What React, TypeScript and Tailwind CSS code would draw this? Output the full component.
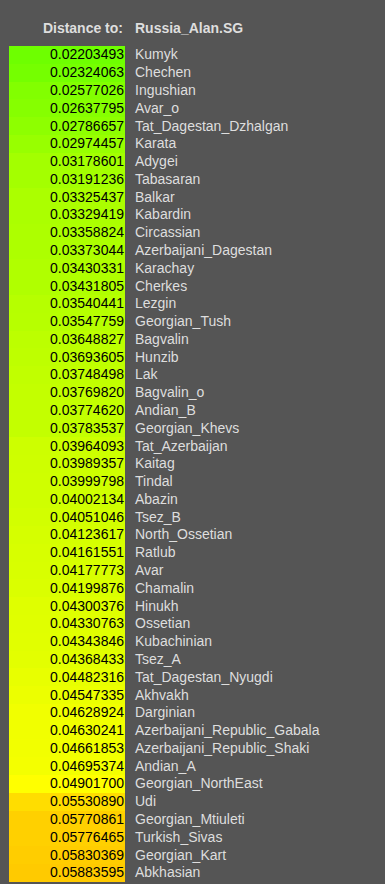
const rows: [string, string][] = [
  ["0.02203493", "Kumyk"],
  ["0.02324063", "Chechen"],
  ["0.02577026", "Ingushian"],
  ["0.02637795", "Avar_o"],
  ["0.02786657", "Tat_Dagestan_Dzhalgan"],
  ["0.02974457", "Karata"],
  ["0.03178601", "Adygei"],
  ["0.03191236", "Tabasaran"],
  ["0.03325437", "Balkar"],
  ["0.03329419", "Kabardin"],
  ["0.03358824", "Circassian"],
  ["0.03373044", "Azerbaijani_Dagestan"],
  ["0.03430331", "Karachay"],
  ["0.03431805", "Cherkes"],
  ["0.03540441", "Lezgin"],
  ["0.03547759", "Georgian_Tush"],
  ["0.03648827", "Bagvalin"],
  ["0.03693605", "Hunzib"],
  ["0.03748498", "Lak"],
  ["0.03769820", "Bagvalin_o"],
  ["0.03774620", "Andian_B"],
  ["0.03783537", "Georgian_Khevs"],
  ["0.03964093", "Tat_Azerbaijan"],
  ["0.03989357", "Kaitag"],
  ["0.03999798", "Tindal"],
  ["0.04002134", "Abazin"],
  ["0.04051046", "Tsez_B"],
  ["0.04123617", "North_Ossetian"],
  ["0.04161551", "Ratlub"],
  ["0.04177773", "Avar"],
  ["0.04199876", "Chamalin"],
  ["0.04300376", "Hinukh"],
  ["0.04330763", "Ossetian"],
  ["0.04343846", "Kubachinian"],
  ["0.04368433", "Tsez_A"],
  ["0.04482316", "Tat_Dagestan_Nyugdi"],
  ["0.04547335", "Akhvakh"],
  ["0.04628924", "Darginian"],
  ["0.04630241", "Azerbaijani_Republic_Gabala"],
  ["0.04661853", "Azerbaijani_Republic_Shaki"],
  ["0.04695374", "Andian_A"],
  ["0.04901700", "Georgian_NorthEast"],
  ["0.05530890", "Udi"],
  ["0.05770861", "Georgian_Mtiuleti"],
  ["0.05776465", "Turkish_Sivas"],
  ["0.05830369", "Georgian_Kart"],
  ["0.05883595", "Abkhasian"],
];

// hue slides from green-ish (94) towards orange as distance grows
const cellColor = (v: number) => {
  const hue = Math.max(45, 94 - (v - 0.022) * 1259);
  return `hsl(${hue.toFixed(1)}, 100%, 50%)`;
};

const App = () => {
  return (
    <div
      className="min-h-screen bg-[#555555] pt-[19px] text-[14px]"
      style={{ fontFamily: '"Liberation Sans", Arial, sans-serif' }}
    >
      {/* header */}
      <div className="flex h-[18px] items-center font-bold text-[#dedede]">
        <div className="ml-[9px] w-[115px] pr-[1px] text-right">Distance to:</div>
        <div className="pl-[11px]">Russia_Alan.SG</div>
      </div>

      <div className="mt-[9px] flex flex-col">
        {rows.map(([dist, name]) => (
          <div key={name} className="flex h-[17.79px] items-center">
            <div
              className="ml-[9px] flex h-full w-[116px] items-center justify-end pr-[1px] text-black"
              style={{ backgroundColor: cellColor(parseFloat(dist)) }}
            >
              {dist}
            </div>
            <div className="whitespace-nowrap pl-[10px] text-[#dedede]">{name}</div>
          </div>
        ))}
      </div>
    </div>
  );
};

export default App;
